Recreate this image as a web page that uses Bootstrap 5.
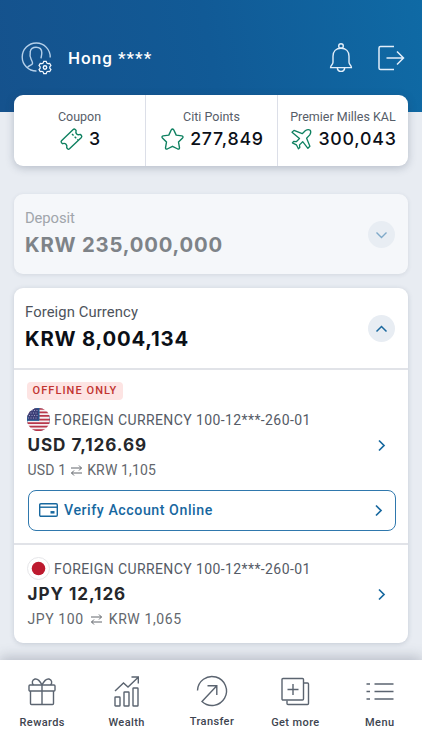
<!DOCTYPE html>
<html lang="en">
<head>
<meta charset="utf-8">
<meta name="viewport" content="width=device-width, initial-scale=1">
<title>Accounts</title>
<link href="https://cdn.jsdelivr.net/npm/bootstrap@5.3.0/dist/css/bootstrap.min.css" rel="stylesheet">
<style>
body{font-family:Roboto,"Liberation Sans",sans-serif;background:#e8ecf2;height:750px;overflow:hidden;color:#0b0f17}
svg{display:block;fill:none;stroke:currentColor;flex:none;overflow:visible}
.ln{display:block;white-space:nowrap;line-height:20px;height:20px}
.top-bar{height:112px;padding:4px 17px 0 21px;background:linear-gradient(80deg,#15528d 0%,#115a96 50%,#0f6aa5 100%);color:#e2eefa}
.user-name{font-size:17px;font-weight:500;letter-spacing:1px;color:#fff;margin-left:16px}
.exit-icon{margin-left:24px}
.panel{margin:0 14px;border-radius:9px;background:#fff;box-shadow:0 1px 5px rgba(60,75,100,.2)}
.stats{height:71px;margin-top:-17px;position:relative;box-shadow:0 2px 8px rgba(40,55,80,.26)}
.stat{width:132px;padding-top:12px;color:#0e8060}
.stat:first-child{width:131px}
.stat:last-child{width:131px}
.stat+.stat{border-left:1px solid #dcdfe8}
.stat-name{font-size:12.5px;color:#565d68}
.num{font-family:Inter,sans-serif;font-weight:600;color:#0b0f17}
.stat-row{height:22px;margin:1px -2px 0 0;gap:6px}
.stat .num{font-size:17.8px;font-weight:500;letter-spacing:.75px}
.sum-name{font-size:14.8px;font-weight:400;color:#4d535c;letter-spacing:.1px}
.sum{font-size:20.3px;font-weight:700;letter-spacing:.8px;margin-top:7px}
.head{height:80px;padding:14px 13px 0 11px}
.dim{background:#f5f7fa;margin-top:28px;box-shadow:0 1px 4px rgba(60,75,100,.12)}
.dim .sum-name{color:#a0a5ab;letter-spacing:-.1px}
.dim .sum{color:#7e8388}
.currency{height:355px;margin-top:14px}
.round{width:27px;height:27px;margin-top:13px;background:#e8edf3;color:#1b699f}
.dim .round{color:#7fa9c9}
.acct{height:100px;border-top:2px solid #e1e3e8;padding:12px 12px 0 14px;color:#17689f}
.acct-usd{height:175px;padding-top:13px}
.off{width:96px;height:18px;line-height:18px;font-size:11px;font-weight:500;letter-spacing:1.05px;color:#c23531;background:#fde4e3;border-radius:4px;margin:-1px -1px 8px}
.acct-line{height:23px;margin-left:-1px;gap:4px}
.acct-name{font-size:14px;letter-spacing:.4px;color:#555b66}
.bal-line{margin-top:4px;padding-right:11px}
.bal{font-size:17.1px;font-weight:700;letter-spacing:.95px;color:#25272b;margin-left:-.5px}
.rate{font-size:14px;color:#63676d;margin-top:5px;margin-left:-.5px}
.acct-usd .rate{letter-spacing:.15px;gap:5px}
.acct .rate-wide{gap:7px;letter-spacing:.6px}
.verify{height:41px;margin-top:10px;border:1.4px solid #2f78ad;border-radius:8px;color:#17689f;font-size:14.2px;font-weight:500;letter-spacing:.55px;padding:0 13px 1px 10px}
.verify .ln{margin-left:6px}
.tabs{height:90px;margin-top:17px;background:#fff;box-shadow:0 -3px 12px rgba(60,70,90,.28);color:#5b6470}
.tab{width:84.4px;padding-top:16px}
.tab-mid{padding:15px 0 0 2px}
.tab .ln{font-size:11px;font-weight:500;letter-spacing:.4px;color:#3e4550;margin-top:5px}
</style>
</head>
<body>
<header class="top-bar d-flex align-items-center">
  <svg width="31" height="32" viewBox="0 0 31 32" stroke-width="1.4"><path d="M29.200 15.500A14 14 0 1 0 15.500 29M6.500 25.500c1.500-2.200 4.500-2 5-4 .2-1.500-.6-2.300-1.300-4C9 15 8.800 12 9.300 9.500 9.800 6.500 12 5.300 15 5.300c4 0 5.800 2 5.800 5.500 0 2-.4 3-.8 5.500" stroke="#b5d0ea"/><path stroke="#f4f9ff" d="M22.800 18.500h3l.7 2 1.500.8 2-.4 1.500 2.600-1.400 1.500v1.800l1.400 1.500-1.500 2.600-2-.4-1.500.8-.7 2h-3l-.7-2-1.500-.8-2 .4-1.500-2.600 1.400-1.500v-1.800l-1.400-1.500 1.500-2.600 2 .4 1.500-.8z" transform="translate(3.800 4) scale(.83)"/><circle cx="24" cy="25.500" r="1.700" stroke="#f4f9ff"/></svg>
  <span class="ln user-name">Hong ****</span>
  <svg class="ms-auto" width="24" height="32" viewBox="0 0 24 32" stroke-width="1.400"><circle cx="12" cy="4" r="2.300"/><path d="M12 6.300c5 0 8 3.200 8 8v6c0 2.500 2.400 3 2.400 5.300H1.600C1.600 23.300 4 22.800 4 20.300v-6c0-4.800 3-8 8-8zM8.300 25.600c.2 5 7.200 5 7.400 0"/></svg>
  <svg class="exit-icon" width="28" height="28" viewBox="0 0 28 28" stroke-width="1.500"><path d="M17 2.500H3.500Q2 2.500 2 4v20q0 1.500 1.500 1.500H17M9.500 14h17M20 7.500l6.500 6.500-6.500 6.500"/></svg>
</header>
<section class="panel stats d-flex">
  <div class="stat d-flex flex-column align-items-center">
    <span class="ln stat-name">Coupon</span>
    <div class="stat-row d-flex align-items-center"><svg width="23" height="22" viewBox="0 0 23 22" stroke-width="1.400" stroke-linejoin="round"><path d="M1.500 12.800L13.200 1.500q1-.9 2 0l.9 1c-.9 2.800 1.200 5 4 3.900l1.300 1q.8 1 0 2L9.500 20.700q-1 .9-1.900 0l-.9-1c.8-3-1.300-5-4-4l-1.200-1q-.8-1 0-1.900z"/><path d="M12 6l6 6" stroke-dasharray="2.200 1.600"/></svg><span class="ln num">3</span></div>
  </div>
  <div class="stat d-flex flex-column align-items-center">
    <span class="ln stat-name">Citi Points</span>
    <div class="stat-row d-flex align-items-center"><svg width="23" height="23" viewBox="0 0 23 23" stroke-width="1.400" stroke-linejoin="round"><path d="M10.300 1.800q1.200-1.600 2.400 0l2.500 5.300 5.700.8q1.800.5.700 2l-4.100 4.100 1 5.800q0 1.800-1.700 1.200L11.500 18.300 6.200 21q-1.700.6-1.700-1.200l1-5.800L1.400 9.900q-1.100-1.500.7-2l5.700-.8z"/></svg><span class="ln num">277,849</span></div>
  </div>
  <div class="stat d-flex flex-column align-items-center">
    <span class="ln stat-name">Premier Milles KAL</span>
    <div class="stat-row d-flex align-items-center"><svg width="21" height="21" viewBox="0 0 21 21" stroke-width="1.300" stroke-linejoin="round"><path d="M1 3.300L3 1.400l8.200 3.300 3.300-3.200q2.700-1.600 4.700-.3 1.300 2-.4 4.700l-3.200 3.300 3.300 8-2 2.100-5.200-6.600-3.200 3.200.3 2.700-1.400 1.200-2-4-4-2 1.200-1.400 2.700.3 3.200-3.200z"/></svg><span class="ln num">300,043</span></div>
  </div>
</section>

<section class="panel dim head d-flex align-items-start">
  <div><span class="ln sum-name">Deposit</span><span class="ln num sum">KRW 235,000,000</span></div>
  <span class="round rounded-circle d-flex align-items-center justify-content-center ms-auto"><svg width="11" height="6" viewBox="0 0 11 6" stroke-width="1.400"><path d="M.5.5l5 5 5-5"/></svg></span>
</section>

<section class="panel currency">
  <div class="head d-flex align-items-start">
    <div><span class="ln sum-name">Foreign Currency</span><span class="ln num sum">KRW 8,004,134</span></div>
    <span class="round rounded-circle d-flex align-items-center justify-content-center ms-auto"><svg width="11" height="6" viewBox="0 0 11 6" stroke-width="1.500"><path d="M.5 5.500l5-5 5 5"/></svg></span>
  </div>
  <div class="acct acct-usd">
    <div class="off text-center">OFFLINE ONLY</div>
    <div class="acct-line d-flex align-items-center">
      <svg width="23" height="23" viewBox="0 0 23 23" stroke="none"><defs><clipPath id="disc"><circle cx="11.500" cy="11.500" r="11.500"/></clipPath></defs><g clip-path="url(#disc)"><path fill="#f5eef1" d="M0 0h23v23H0z"/><path stroke="#b8374a" stroke-width="1.750" d="M0 .9h23M0 4.430h23M0 7.960h23M0 11.500h23M0 15.030h23M0 18.560h23M0 22.100h23"/><path fill="#3c3f77" d="M0 0h12v12.300H0z"/><path stroke="#9da0c4" stroke-width="1" stroke-dasharray="1 1.500" d="M2 2.500h9M1 5h10M2 7.500h9M1 10h10"/></g></svg>
      <span class="ln acct-name">FOREIGN CURRENCY 100-12***-260-01</span>
    </div>
    <div class="bal-line d-flex align-items-center"><span class="ln num bal">USD 7,126.69</span><svg class="ms-auto" width="7" height="11" viewBox="0 0 7 11" stroke-width="1.700"><path d="M1 .5l5 5-5 5"/></svg></div>
    <div class="rate d-flex align-items-center"><span class="ln">USD 1</span><svg width="11" height="11" viewBox="0 0 11 11" stroke-width="1"><path d="M0 3h10.500M8 .5L10.500 3 8 5.500M11 8H.5M3 5.500L.5 8 3 10.500"/></svg><span class="ln">KRW 1,105</span></div>
    <div class="verify d-flex align-items-center"><svg width="19" height="14" viewBox="0 0 19 14" stroke-width="1.400"><rect x=".7" y=".7" width="17.600" height="12.600" rx="1.200"/><path d="M.7 4.200h17.600"/><path stroke-width="2.500" d="M11.500 9.300h4"/></svg><span class="ln">Verify Account Online</span><svg class="ms-auto" width="7" height="11" viewBox="0 0 7 11" stroke-width="1.700"><path d="M1 .5l5 5-5 5"/></svg></div>
  </div>
  <div class="acct">
    <div class="acct-line d-flex align-items-center">
      <svg width="23" height="23" viewBox="0 0 23 23"><circle cx="11.500" cy="11.500" r="11" stroke="#e6e6e9"/><circle cx="11.500" cy="11.500" r="6.800" fill="#bd1a2f" stroke="none"/></svg>
      <span class="ln acct-name">FOREIGN CURRENCY 100-12***-260-01</span>
    </div>
    <div class="bal-line d-flex align-items-center"><span class="ln num bal">JPY 12,126</span><svg class="ms-auto" width="7" height="11" viewBox="0 0 7 11" stroke-width="1.700"><path d="M1 .5l5 5-5 5"/></svg></div>
    <div class="rate rate-wide d-flex align-items-center"><span class="ln">JPY 100</span><svg width="11" height="11" viewBox="0 0 11 11" stroke-width="1"><path d="M0 3h10.500M8 .5L10.500 3 8 5.500M11 8H.5M3 5.500L.5 8 3 10.500"/></svg><span class="ln">KRW 1,065</span></div>
  </div>
</section>

<nav class="tabs d-flex position-relative">
  <div class="tab d-flex flex-column align-items-center"><svg width="32" height="32" viewBox="0 0 32 32" stroke-width="1.400"><rect x="3" y="9" width="26" height="6" rx="1"/><path d="M4.500 15v12.500q0 1 1 1h21q1 0 1-1V15M16 9v19.500M16 9C14 5 11.500 2.500 9 3 6 4 5.500 7 7.500 9M16 9c2-4 4.500-6.500 7-6 3 1 3.500 4 1.500 6"/></svg><span class="ln">Rewards</span></div>
  <div class="tab d-flex flex-column align-items-center"><svg width="32" height="32" viewBox="0 0 32 32" stroke-width="1.400"><rect x="4" y="21" width="5" height="9" rx=".6"/><rect x="13" y="16" width="5" height="14" rx=".6"/><rect x="22" y="12" width="5" height="18" rx=".6"/><path d="M4 15l8.500-8 4.500 4L27 1.500M20.500 1h6.800v6.500"/></svg><span class="ln">Wealth</span></div>
  <div class="tab tab-mid d-flex flex-column align-items-center"><svg width="32" height="32" viewBox="0 0 32 32" stroke-width="1.400"><path d="M1.500 15.500A14.500 14.500 0 1 1 6 26.500L20.800 10.700M11.500 10.700h9.300V20"/></svg><span class="ln">Transfer</span></div>
  <div class="tab d-flex flex-column align-items-center"><svg width="32" height="32" viewBox="0 0 32 32" stroke-width="1.400"><rect x="3" y="2.500" width="21.500" height="21.500" rx="1"/><path d="M25 7h3.500q1 0 1 1v19.500q0 1-1 1H9q-1 0-1-1V24.500M14 8v11M8.500 13.500h11"/></svg><span class="ln">Get more</span></div>
  <div class="tab d-flex flex-column align-items-center"><svg width="32" height="32" viewBox="0 0 32 32" stroke-width="1.400"><path d="M2.500 8H6m4.500 0h19M2.500 15.500H6m4.500 0h19M2.500 23H6m4.500 0h19"/></svg><span class="ln">Menu</span></div>
</nav>
<script src="https://cdn.jsdelivr.net/npm/bootstrap@5.3.0/dist/js/bootstrap.bundle.min.js"></script>
</body>
</html>
